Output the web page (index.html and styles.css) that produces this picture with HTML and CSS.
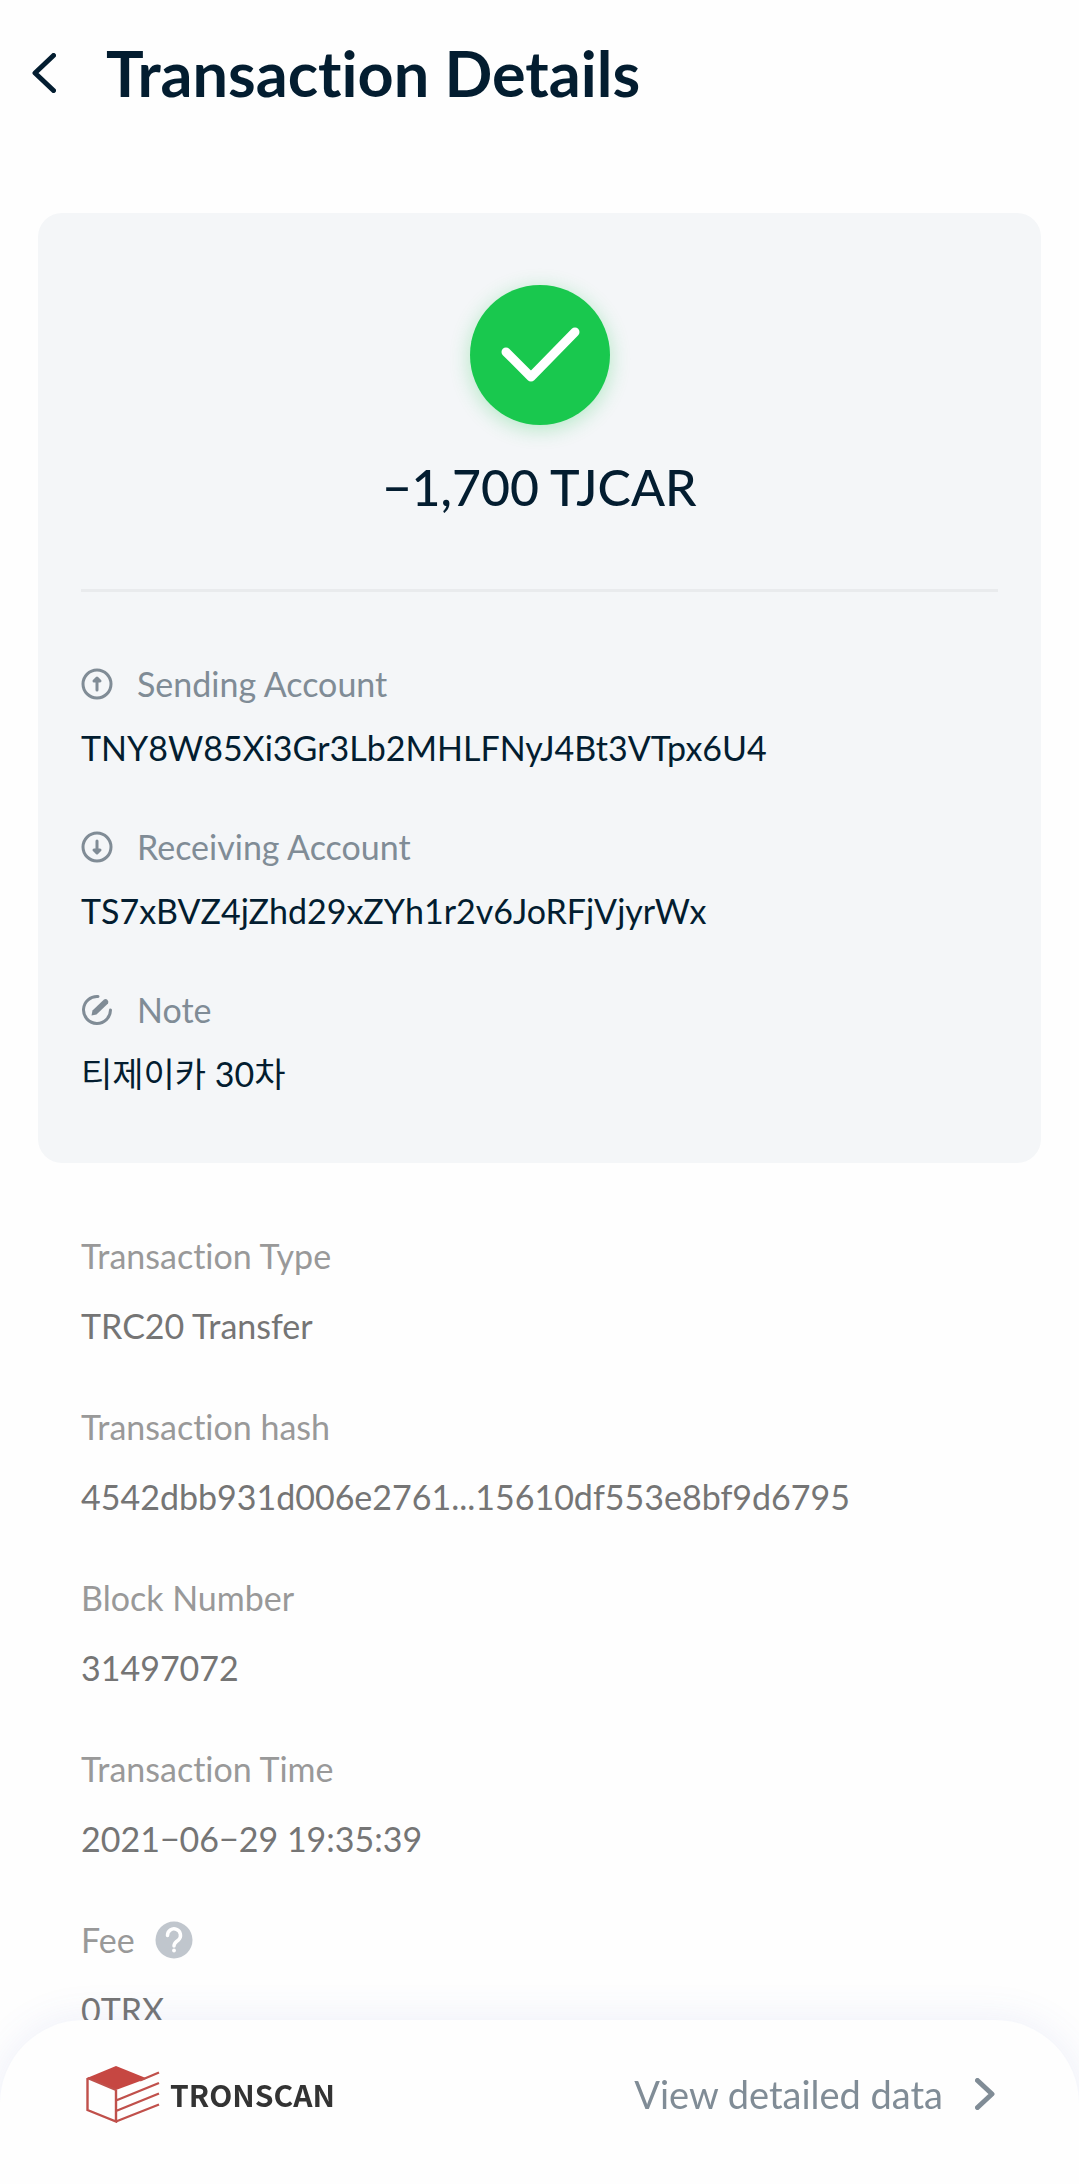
FILE: index.html
```html
<!DOCTYPE html>
<html lang="en">
<head>
    <meta charset="UTF-8">
    <meta name="viewport" content="width=device-width, initial-scale=1.0">
    <title>Transaction Details</title>
    <link rel="stylesheet" href="styles.css">
</head>
<body>
    <header class="topbar">
        <button class="back" type="button" aria-label="Back">
            <svg width="24" height="40" viewBox="0 0 24 40"><path d="M21.500 2.500L3 20l18.500 17.500" fill="none" stroke="currentColor" stroke-width="5" stroke-linecap="round" stroke-linejoin="round"/></svg>
        </button>
        <h1>Transaction Details</h1>
    </header>

    <main>
        <section class="card">
            <div class="status">
                <svg width="140" height="140" viewBox="0 0 140 140"><path d="M36 67l25 25 44-45" fill="none" stroke="#fff" stroke-width="9" stroke-linecap="round" stroke-linejoin="round"/></svg>
            </div>
            <p class="amount">−1,700 TJCAR</p>
            <hr>
            <dl class="accounts">
                <div>
                    <dt>
                        <svg width="32" height="32" viewBox="0 0 32 32" fill="none" stroke="currentColor" stroke-width="3" stroke-linecap="round" stroke-linejoin="round"><circle cx="16" cy="16" r="14"/><path d="M16 22V12"/><path d="M13 13l3-3 3 3z" fill="currentColor"/></svg>
                        Sending Account
                    </dt>
                    <dd>TNY8W85Xi3Gr3Lb2MHLFNyJ4Bt3VTpx6U4</dd>
                </div>
                <div>
                    <dt>
                        <svg width="32" height="32" viewBox="0 0 32 32" fill="none" stroke="currentColor" stroke-width="3" stroke-linecap="round" stroke-linejoin="round"><circle cx="16" cy="16" r="14"/><path d="M16 10v10"/><path d="M13 19l3 3 3-3z" fill="currentColor"/></svg>
                        Receiving Account
                    </dt>
                    <dd>TS7xBVZ4jZhd29xZYh1r2v6JoRFjVjyrWx</dd>
                </div>
                <div>
                    <dt>
                        <svg width="32" height="32" viewBox="0 0 32 32" fill="none" stroke="currentColor" stroke-width="3" stroke-linecap="round"><path d="M17 2.500A13.500 13.500 0 1 0 29.500 16"/><path d="M10.500 21.500l1-5L23 5.500q2-1 3.500.500t.500 3.500L15.500 20.500z" fill="currentColor" stroke="none"/></svg>
                        Note
                    </dt>
                    <dd>티제이카 30차</dd>
                </div>
            </dl>
        </section>

        <dl class="details">
            <div>
                <dt>Transaction Type</dt>
                <dd>TRC20 Transfer</dd>
            </div>
            <div>
                <dt>Transaction hash</dt>
                <dd>4542dbb931d006e2761...15610df553e8bf9d6795</dd>
            </div>
            <div>
                <dt>Block Number</dt>
                <dd>31497072</dd>
            </div>
            <div>
                <dt>Transaction Time</dt>
                <dd>2021−06−29 19:35:39</dd>
            </div>
            <div>
                <dt>
                    Fee
                    <button class="help" type="button" aria-label="About fees">
                        <svg width="38" height="38" viewBox="0 0 38 38"><circle cx="19" cy="19" r="18.500" fill="#c0c6cd"/><path d="M12.500 14.500a6.500 6.500 0 1 1 11 4.500Q19 22 19 25" fill="none" stroke="#fff" stroke-width="3.500" stroke-linecap="round"/><circle cx="19" cy="29.500" r="1.900" fill="#fff"/></svg>
                    </button>
                </dt>
                <dd>0TRX</dd>
            </div>
        </dl>
    </main>

    <footer class="bottombar">
        <div class="brand">
            <svg width="74" height="58" viewBox="0 0 74 58"><path d="M1 13L30 1l31 12.500L30 25z" fill="#c64742"/><path d="M1.500 13v32L30 56.500V25M1.500 13L30 25M54 15.500L73 7.500M30 35.500l43-17.500M30 46l43-17.500M30 56.500L73 39.500" fill="none" stroke="#c0504b" stroke-width="2.400"/></svg>
            <span>TRONSCAN</span>
        </div>
        <a class="more" href="#">
            View detailed data
            <svg width="20" height="32" viewBox="0 0 20 32"><path d="M2.500 2.500L17 16 2.500 29.500" fill="none" stroke="currentColor" stroke-width="5" stroke-linecap="round" stroke-linejoin="round"/></svg>
        </a>
    </footer>
</body>
</html>
```

FILE: styles.css
```css
* {
    box-sizing: border-box;
}

body {
    margin: 0;
    padding-bottom: 144px;
    background-color: #fefefe;
    color: #031d30;
    font-family: Lato, "Noto Sans CJK KR", sans-serif;
    font-variant-ligatures: none;
}

h1, p, dl, dd {
    margin: 0;
}

svg {
    display: block;
    flex-shrink: 0;
}

button {
    padding: 0;
    background: none;
    border: none;
    color: inherit;
    cursor: pointer;
}

.topbar {
    display: flex;
    align-items: center;
    gap: 50px;
    height: 145px;
    padding: 0 32px;
}

h1 {
    font-size: 63px;
    font-weight: bold;
    line-height: 80px;
}

main {
    padding: 68px 38px 0;
}

.card {
    padding: 72px 43px 65px;
    background-color: #f4f6f8;
    border-radius: 24px;
}

.status {
    width: 140px;
    margin: 0 auto 30px;
    background-color: #19c84e;
    border-radius: 50%;
    box-shadow: 0 4px 20px rgba(25, 200, 78, 0.3);
}

.amount {
    font-size: 50px;
    font-weight: 500;
    line-height: 64px;
    text-align: center;
}

hr {
    height: 3px;
    margin: 70px 0 72px;
    background-color: #e9ebed;
    border: none;
}

dt {
    display: flex;
    align-items: center;
    font-size: 34px;
    line-height: 40px;
}

dd {
    font-size: 34px;
    line-height: 48px;
    overflow-wrap: anywhere;
}

.accounts {
    display: grid;
    gap: 55px;
}

.accounts dt {
    gap: 24px;
    margin-bottom: 20px;
    color: #808c96;
}

.details {
    display: grid;
    gap: 57px;
    padding: 73px 43px 0;
}

.details dt {
    gap: 20px;
    margin-bottom: 26px;
    color: #999;
}

.details dd {
    color: #757575;
}

.bottombar {
    position: fixed;
    right: 0;
    bottom: 0;
    left: 0;
    display: flex;
    align-items: center;
    justify-content: space-between;
    height: 164px;
    padding: 0 84px 16px 86px;
    background-color: #fefefe;
    border-radius: 84px 84px 0 0;
    box-shadow: 0 0 40px rgba(80, 100, 200, 0.1);
}

.brand {
    display: flex;
    align-items: center;
    gap: 10px;
    color: #333;
    font-family: "Noto Sans CJK KR", sans-serif;
    font-size: 30px;
    font-weight: bold;
}

.more {
    display: flex;
    align-items: center;
    gap: 32px;
    color: #808c96;
    font-size: 38px;
    text-decoration: none;
}
```
